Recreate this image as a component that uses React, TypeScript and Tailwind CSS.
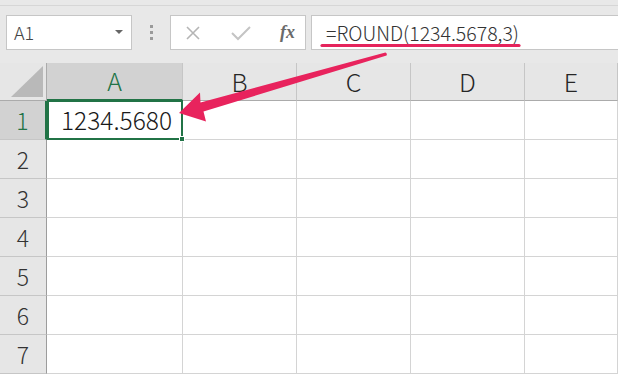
import * as React from 'react';

const cols = ['A', 'B', 'C', 'D', 'E'];
const rows = [1, 2, 3, 4, 5, 6, 7];

export default function App() {
    return (
        <div
            className="relative w-[618px] h-[377px] overflow-hidden bg-white font-light"
            style={{ fontFamily: '"Noto Sans CJK JP", "Noto Sans", sans-serif' }}
        >
            {/* Toolbar / formula bar */}
            <div className="h-[63px] bg-[#e8e8e8] border-t-[3px] border-t-[#e8e8e8] relative">
                <div className="absolute top-[2px] left-0 right-0 h-px bg-[#d6d6d6]" />
                <div className="flex items-start pt-[12px]">
                    <div className="ml-[6px] w-[126px] h-[35px] bg-white border border-[#c6c6c6] flex items-center justify-between pl-[7px] pr-[8px]">
                        <span className="text-[18px] text-[#444]">A1</span>
                        <svg width="8" height="5" viewBox="0 0 8 5">
                            <path d="M0 0 L8 0 L4 4 Z" fill="#666" />
                        </svg>
                    </div>
                    <div className="w-[38px] h-[35px] flex flex-col items-center justify-center gap-[3px]">
                        <div className="w-[3px] h-[3px] bg-[#9a9a9a]" />
                        <div className="w-[3px] h-[3px] bg-[#9a9a9a]" />
                        <div className="w-[3px] h-[3px] bg-[#9a9a9a]" />
                    </div>
                    <div className="w-[136px] h-[35px] bg-white border border-[#c6c6c6] flex items-center pl-[14px] pr-[10px] justify-between">
                        <svg width="16" height="16" viewBox="0 0 16 16">
                            <path d="M2 2 L14 14 M14 2 L2 14" stroke="#b5b5b5" strokeWidth="1.6" />
                        </svg>
                        <svg width="20" height="16" viewBox="0 0 20 16">
                            <path d="M1 8 L7 14 L19 2" stroke="#c4c4c4" strokeWidth="2" fill="none" />
                        </svg>
                        <span
                            className="text-[18px] italic font-bold text-[#6a6a6a]"
                            style={{ fontFamily: '"Liberation Serif", serif' }}
                        >
                            fx
                        </span>
                    </div>
                    <div className="ml-[5px] flex-1 h-[35px] bg-white border border-[#c6c6c6] border-r-0 flex items-center pl-[14px]">
                        <span className="text-[19.5px] text-[#333]">=ROUND(1234.5678,3)</span>
                    </div>
                </div>
            </div>

            {/* Sheet grid */}
            <div className="grid grid-cols-[47px_136px_114px_114px_114px_1fr] grid-rows-[38px_repeat(7,39px)]">
                <div className="bg-[#e6e6e6] border-r border-b border-[#ababab] relative">
                    <svg className="absolute right-[3px] bottom-[3px]" width="32" height="31" viewBox="0 0 32 31">
                        <path d="M32 0 L32 31 L0 31 Z" fill="#b9b9b9" />
                    </svg>
                </div>
                {cols.map((c) => (
                    <div
                        key={c}
                        className={
                            c === 'A'
                                ? 'bg-[#d2d2d2] border-r border-r-[#c6c6c6] border-b-2 border-b-[#217346] flex items-center justify-center text-[25px] text-[#217346]'
                                : 'bg-[#e6e6e6] border-r border-r-[#c6c6c6] border-b border-b-[#ababab] flex items-center justify-center text-[25px] text-[#262626]'
                        }
                    >
                        {c}
                    </div>
                ))}
                {rows.map((r) => (
                    <React.Fragment key={r}>
                        <div
                            className={
                                r === 1
                                    ? 'bg-[#d2d2d2] border-r-2 border-r-[#217346] border-b border-b-[#c6c6c6] flex items-center justify-center text-[23px] text-[#217346]'
                                    : 'bg-[#e6e6e6] border-r border-r-[#9c9c9c] border-b border-b-[#c6c6c6] flex items-center justify-center text-[23px] text-[#333]'
                            }
                        >
                            {r}
                        </div>
                        {cols.map((c) =>
                            r === 1 && c === 'A' ? (
                                <div
                                    key={c}
                                    className="relative border-2 border-[#217346] -mt-px flex items-center justify-end pr-[9px] text-[24.5px] text-[#1a1a1a]"
                                >
                                    1234.5680
                                    <div className="absolute -right-[4px] -bottom-[4px] w-[6px] h-[6px] bg-[#217346] border border-white" />
                                </div>
                            ) : (
                                <div key={c} className="border-r border-b border-[#d4d4d4]" />
                            )
                        )}
                    </React.Fragment>
                ))}
            </div>

            {/* Annotation: underline + arrow */}
            <svg className="absolute left-0 top-0 pointer-events-none" width="618" height="377" viewBox="0 0 618 377">
                <path d="M322 45.5 L519 45.5" stroke="#e5245c" strokeWidth="3.2" strokeLinecap="round" />
                <path
                    d="M179 113 L200 92.5 L200.5 102.5 L385.4 52.4 Q387.5 53.3 386.6 55.6 L203.5 111.5 L206 121.5 Z"
                    fill="#e8235d"
                />
            </svg>
        </div>
    );
}
